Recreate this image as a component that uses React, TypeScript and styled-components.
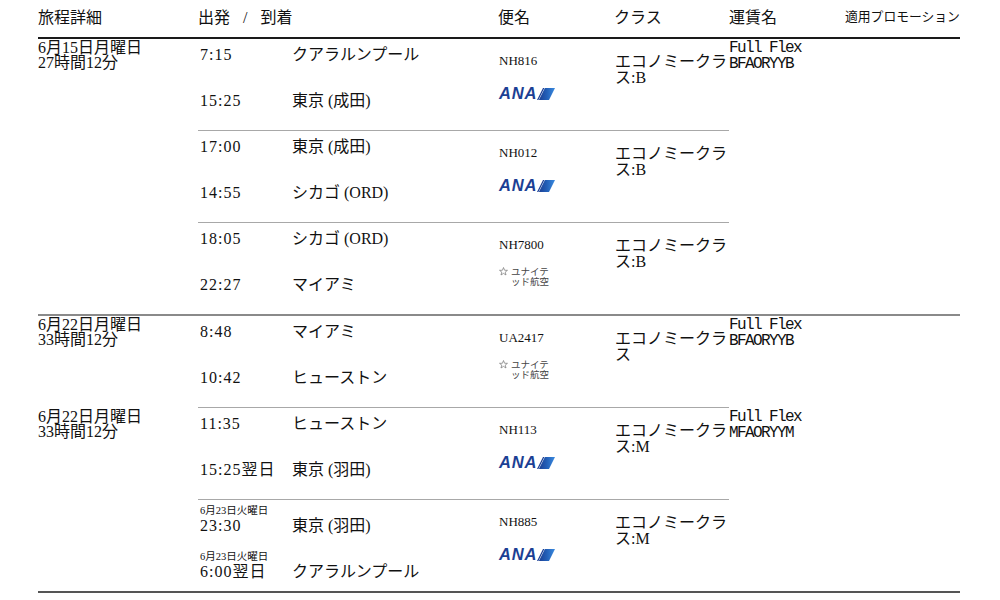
import React from "react";
import styled, { createGlobalStyle, css } from "styled-components";

const GlobalStyle = createGlobalStyle`
  html, body { margin: 0; padding: 0; background: #fff; }
  body {
    font-family: "Liberation Serif", "Noto Sans CJK JP", serif;
    color: #111;
  }
`;

type Stop = { time: string; city: string; note?: string };
type Leg = { dep: Stop; arr: Stop; flight: string; carrier: "ana" | "ua"; cls: string };
type Journey = { date: string; dur: string; fare: string; code: string; legs: Leg[] };

const groups: Journey[][] = [
  [
    {
      date: "6月15日月曜日",
      dur: "27時間12分",
      fare: "Full Flex",
      code: "BFAORYYB",
      legs: [
        { dep: { time: "7:15", city: "クアラルンプール" }, arr: { time: "15:25", city: "東京 (成田)" }, flight: "NH816", carrier: "ana", cls: "エコノミークラス:B" },
        { dep: { time: "17:00", city: "東京 (成田)" }, arr: { time: "14:55", city: "シカゴ (ORD)" }, flight: "NH012", carrier: "ana", cls: "エコノミークラス:B" },
        { dep: { time: "18:05", city: "シカゴ (ORD)" }, arr: { time: "22:27", city: "マイアミ" }, flight: "NH7800", carrier: "ua", cls: "エコノミークラス:B" },
      ],
    },
  ],
  [
    {
      date: "6月22日月曜日",
      dur: "33時間12分",
      fare: "Full Flex",
      code: "BFAORYYB",
      legs: [
        { dep: { time: "8:48", city: "マイアミ" }, arr: { time: "10:42", city: "ヒューストン" }, flight: "UA2417", carrier: "ua", cls: "エコノミークラス" },
      ],
    },
    {
      date: "6月22日月曜日",
      dur: "33時間12分",
      fare: "Full Flex",
      code: "MFAORYYM",
      legs: [
        { dep: { time: "11:35", city: "ヒューストン" }, arr: { time: "15:25翌日", city: "東京 (羽田)" }, flight: "NH113", carrier: "ana", cls: "エコノミークラス:M" },
        { dep: { time: "23:30", city: "東京 (羽田)", note: "6月23日火曜日" }, arr: { time: "6:00翌日", city: "クアラルンプール", note: "6月23日火曜日" }, flight: "NH885", carrier: "ana", cls: "エコノミークラス:M" },
      ],
    },
  ],
];

const Page = styled.div`
  padding: 0 40px 0 38px;
`;

const Table = styled.table`
  width: 922px;
  border-collapse: collapse;
  table-layout: fixed;
`;

const Head = styled.thead`
  border-bottom: 2px solid #1a1a1a;
`;

const Group = styled.tbody<{ $first?: boolean; $last?: boolean }>`
  ${(p) => !p.$first && css`border-top: 2px solid #8a8a8a;`}
  ${(p) => p.$last && css`border-bottom: 2px solid #555;`}
`;

const Th = styled.th<{ $small?: boolean; $spaced?: boolean }>`
  height: 34px;
  padding: 0 0 3px 0;
  text-align: left;
  vertical-align: middle;
  font-weight: normal;
  font-size: ${(p) => (p.$small ? "12.8px" : "16px")};
  line-height: 17px;
  white-space: nowrap;
  overflow: hidden;
  ${(p) => p.$spaced && css`word-spacing: 9px;`}
`;

const Td = styled.td<{ $sep?: boolean }>`
  vertical-align: top;
  padding: 0;
  ${(p) => p.$sep && css`border-top: 1px solid #a8a8a8;`}
`;

const DateBlock = styled.div`
  font-size: 16px;
  line-height: 15px;
  padding-top: 1px;
`;

const Stops = styled.div`
  height: 91px;
  box-sizing: border-box;
  padding: 8px 0 0 2px;
  display: flex;
  flex-direction: column;
`;

const StopItem = styled.div`
  flex: none;
  height: 46px;
  display: grid;
  grid-template-columns: 92px 1fr;
  align-content: start;
`;

const Note = styled.div`
  grid-row: 1;
  grid-column: 1 / -1;
  font-size: 10.5px;
  line-height: 10px;
  margin-top: -2px;
  margin-bottom: 2px;
  white-space: nowrap;
`;

const Time = styled.div`
  grid-row: 2;
  grid-column: 1;
  font-size: 16px;
  line-height: 16px;
  letter-spacing: 1px;
  white-space: nowrap;
`;

const City = styled.div`
  grid-row: 2;
  grid-column: 2;
  font-size: 16px;
  line-height: 16px;
  white-space: nowrap;
`;

const FlightBox = styled.div`
  padding: 14px 0 0 1px;
`;

const FlightNo = styled.div`
  font-size: 13px;
  line-height: 16px;
`;

const AnaMark = styled.div`
  margin-top: 18px;
  display: flex;
  align-items: center;
  height: 13px;
`;

const AnaText = styled.span`
  font-family: "Liberation Sans", Arial, sans-serif;
  font-weight: 700;
  font-style: italic;
  font-size: 16.5px;
  line-height: 13px;
  letter-spacing: 0.8px;
  color: #1c3f94;
`;

const UaMark = styled.div`
  margin-top: 13px;
  display: flex;
  align-items: flex-start;
  gap: 3px;
  color: #444;
`;

const UaText = styled.div`
  font-family: "Noto Sans CJK JP", sans-serif;
  font-size: 9.5px;
  line-height: 10px;
  width: 40px;
`;

const ClassText = styled.div`
  padding: 15px 0 0 1px;
  font-size: 16px;
  line-height: 16px;
`;

const Fare = styled.div`
  font-family: "Liberation Mono", "Noto Sans CJK JP", monospace;
  font-size: 16px;
  line-height: 16px;
  letter-spacing: -1.6px;
  padding-top: 1px;
`;

function Carrier({ kind }: { kind: "ana" | "ua" }) {
  if (kind === "ana") {
    return (
      <AnaMark>
        <AnaText>ANA</AnaText>
        <svg width="18" height="12" viewBox="0 0 18 12">
          <defs>
            <linearGradient id="anaGrad" x1="0" y1="0" x2="1" y2="0">
              <stop offset="0" stopColor="#1c3f94" />
              <stop offset="0.5" stopColor="#2360b8" />
              <stop offset="1" stopColor="#3b8be0" />
            </linearGradient>
          </defs>
          <polygon points="6,0 7.4,0 1.4,12 0,12" fill="#1c3f94" />
          <polygon points="7.9,0 18,0 12,12 1.9,12" fill="url(#anaGrad)" />
        </svg>
      </AnaMark>
    );
  }
  return (
    <UaMark>
      <svg width="9" height="9" viewBox="0 0 10 10" style={{ marginTop: 1 }}>
        <polygon
          points="5,0.6 6.2,3.6 9.4,3.7 6.9,5.7 7.8,8.9 5,7.1 2.2,8.9 3.1,5.7 0.6,3.7 3.8,3.6"
          fill="none"
          stroke="#777"
          strokeWidth="0.8"
        />
      </svg>
      <UaText>ユナイテッド航空</UaText>
    </UaMark>
  );
}

function StopRow({ stop }: { stop: Stop }) {
  return (
    <StopItem>
      {stop.note && <Note>{stop.note}</Note>}
      <Time>{stop.time}</Time>
      <City>{stop.city}</City>
    </StopItem>
  );
}

export default function App() {
  return (
    <>
      <GlobalStyle />
      <Page>
        <Table>
          <colgroup>
            <col style={{ width: 160 }} />
            <col style={{ width: 300 }} />
            <col style={{ width: 116 }} />
            <col style={{ width: 115 }} />
            <col style={{ width: 116 }} />
            <col style={{ width: 115 }} />
          </colgroup>
          <Head>
            <tr>
              <Th>旅程詳細</Th>
              <Th $spaced>出発 / 到着</Th>
              <Th>便名</Th>
              <Th>クラス</Th>
              <Th>運賃名</Th>
              <Th $small>適用プロモーション</Th>
            </tr>
          </Head>
          {groups.map((group, gi) => (
            <Group key={gi} $first={gi === 0} $last={gi === groups.length - 1}>
              {group.map((j, ji) =>
                j.legs.map((leg, li) => {
                  const sep = !(ji === 0 && li === 0);
                  return (
                    <tr key={`${ji}-${li}`}>
                      {li === 0 && (
                        <Td rowSpan={j.legs.length}>
                          <DateBlock>
                            {j.date}
                            <br />
                            {j.dur}
                          </DateBlock>
                        </Td>
                      )}
                      <Td $sep={sep}>
                        <Stops>
                          <StopRow stop={leg.dep} />
                          <StopRow stop={leg.arr} />
                        </Stops>
                      </Td>
                      <Td $sep={sep}>
                        <FlightBox>
                          <FlightNo>{leg.flight}</FlightNo>
                          <Carrier kind={leg.carrier} />
                        </FlightBox>
                      </Td>
                      <Td $sep={sep}>
                        <ClassText>{leg.cls}</ClassText>
                      </Td>
                      {li === 0 && (
                        <Td rowSpan={j.legs.length}>
                          <Fare>
                            {j.fare}
                            <br />
                            {j.code}
                          </Fare>
                        </Td>
                      )}
                      {li === 0 && <Td rowSpan={j.legs.length} />}
                    </tr>
                  );
                })
              )}
            </Group>
          ))}
        </Table>
      </Page>
    </>
  );
}
